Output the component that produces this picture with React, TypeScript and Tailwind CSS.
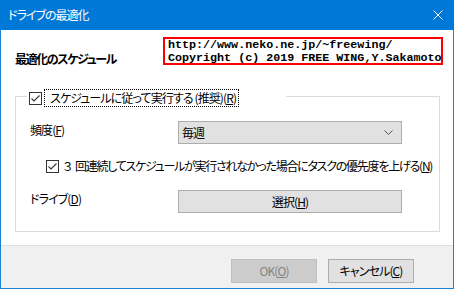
import React from "react";

const jp = "font-['Noto_Sans_CJK_JP',sans-serif] [font-feature-settings:'palt']";

function Check() {
  return (
    <div className="w-[13px] h-[13px] border border-[#333333] bg-white flex items-center justify-center shrink-0">
      <svg width="11" height="11" viewBox="0 0 11 11">
        <polyline points="1.5,5.5 4,8 9.5,2.5" fill="none" stroke="#333333" strokeWidth="1.1" />
      </svg>
    </div>
  );
}

export default function App() {
  return (
    <div className={`w-[454px] h-[289px] flex flex-col bg-white border-x border-b border-[#1883d7] text-black text-[12px] tracking-[-0.9px] ${jp}`}>
      {/* title bar */}
      <div className="h-[30px] bg-[#0078d7] flex items-center justify-between pl-[8px] pr-[10px] -mx-px">
        <span className="text-white text-[12px] leading-[16px] tracking-[-1px]">ドライブの最適化</span>
        <svg width="10" height="10" viewBox="0 0 10 10" className="mr-[1px]">
          <path d="M0.5 0.5 L9.5 9.5 M9.5 0.5 L0.5 9.5" stroke="white" strokeWidth="1" />
        </svg>
      </div>

      {/* body */}
      <div className="h-[215px] pl-[14px] flex flex-col">
        <div className="h-[66px] flex items-start">
          <div className="w-[148px] mt-[21px] font-bold leading-[16px] tracking-[-1.4px]">最適化のスケジュール</div>
          <div className="mt-[7px] w-[280px] h-[28px] border-2 border-[#ff0000] bg-white pl-[3px] font-['Liberation_Mono',monospace] font-bold text-[11.7px] leading-[12.5px] tracking-normal whitespace-pre [font-feature-settings:normal]">
            <div>http://www.neko.ne.jp/~freewing/</div>
            <div>Copyright (c) 2019 FREE WING,Y.Sakamoto</div>
          </div>
        </div>

        {/* group box */}
        <div className="relative w-[425px] h-[136px] border border-[#dcdcdc] pl-[14px] pt-[24px] flex flex-col">
          <div className="absolute left-[11px] top-[-8px] w-[259px] h-[18px] bg-white flex items-center pl-[2px]">
            <Check />
            <div className="ml-[2px] h-[18px] border border-dotted border-black flex items-center pl-[5px] pr-[2px] leading-[16px] whitespace-nowrap">
              スケジュールに従って実行する (推奨)(<span className="underline">R</span>)
            </div>
          </div>

          <div className="flex items-start">
            <div className="w-[148px] mt-[1px] leading-[16px]">
              頻度(<span className="underline">F</span>)
            </div>
            <div className="w-[224px] h-[23px] bg-[#e1e1e1] border border-[#adadad] flex items-center justify-between pl-[3px] pr-[8px] leading-[16px]">
              <span>毎週</span>
              <svg width="9" height="5" viewBox="0 0 9 5">
                <polyline points="0.5,0.5 4.5,4.5 8.5,0.5" fill="none" stroke="#555555" strokeWidth="1" />
              </svg>
            </div>
          </div>

          <div className="mt-[15px] ml-[16px] h-[14px] flex items-center">
            <Check />
            <div className="ml-[4px] leading-[16px] whitespace-nowrap tracking-[-1.25px]">
              <span className="mr-[4px]">３</span>回連続してスケジュールが実行されなかった場合にタスクの優先度を上げる(<span className="underline">N</span>)
            </div>
          </div>

          <div className="mt-[17px] flex items-start">
            <div className="w-[148px] mt-[1px] leading-[16px]">
              ドライブ(<span className="underline">D</span>)
            </div>
            <div className="w-[224px] h-[23px] bg-[#e1e1e1] border border-[#adadad] flex items-center justify-center leading-[16px]">
              選択(<span className="underline">H</span>)
            </div>
          </div>
        </div>
      </div>

      {/* footer */}
      <div className="flex-1 bg-[#f0f0f0] border-t border-[#dfdfdf] flex justify-end items-start pt-[13px] pr-[39px] gap-[11px]">
        <div className="w-[86px] h-[24px] bg-[#cccccc] border border-[#bfbfbf] text-[#838383] flex items-center justify-center leading-[16px]">
          OK(<span className="underline">O</span>)
        </div>
        <div className="w-[86px] h-[24px] bg-[#e1e1e1] border border-[#adadad] flex items-center justify-center leading-[16px]">
          キャンセル(<span className="underline">C</span>)
        </div>
      </div>
    </div>
  );
}
